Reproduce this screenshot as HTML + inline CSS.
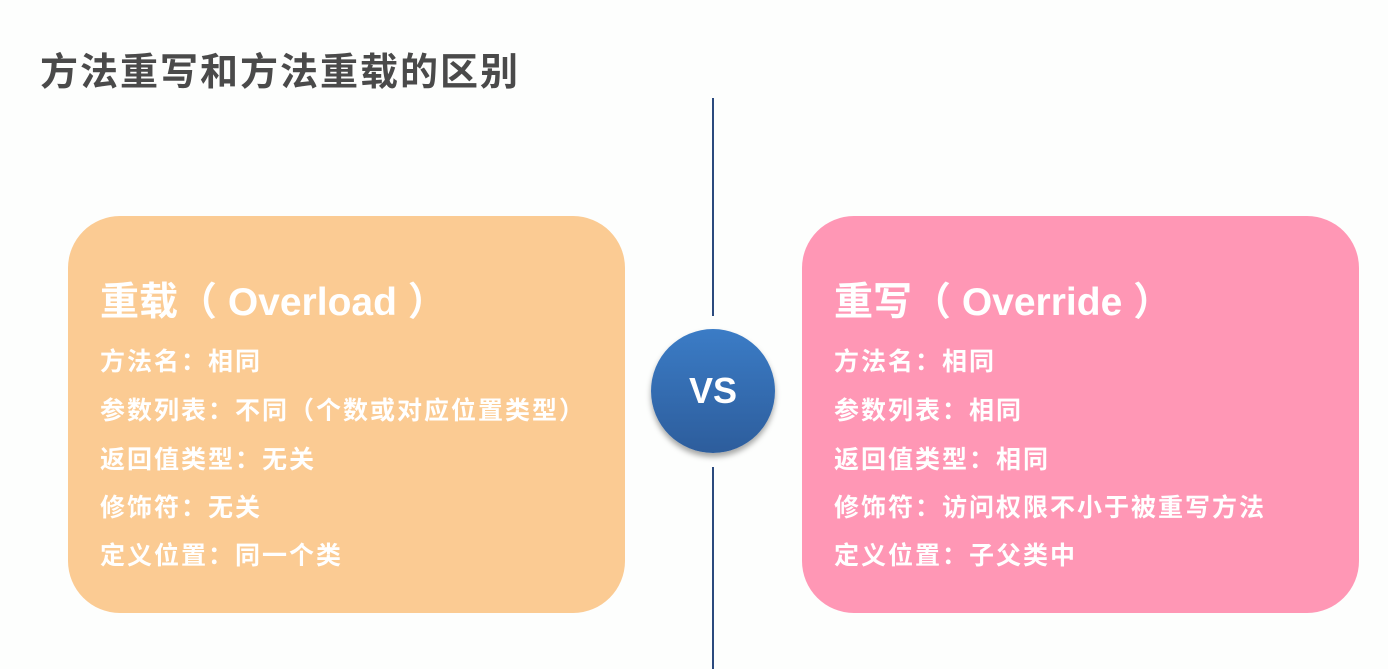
<!DOCTYPE html>
<html><head><meta charset="utf-8"><style>
body{margin:0;width:1388px;height:669px;background:#fdfefd;position:relative;overflow:hidden;font-family:"Liberation Sans","Noto Sans CJK SC",sans-serif;font-weight:bold}
.t{position:absolute;left:40px;top:50px;font-size:38px;letter-spacing:2px;color:#4a4a4a;line-height:46px}
.ln{position:absolute;left:712px;width:2px;background:#2b4a7e}
.box{position:absolute;top:216px;width:557px;height:397px;border-radius:52px;color:#fff}
.h{position:absolute;left:32px;top:62px;font-size:39px;line-height:50px;margin:0;white-space:pre}
.l{position:absolute;left:32px;font-size:25px;letter-spacing:2px;line-height:32px}
.c{position:absolute;left:651px;top:329px;width:124px;height:124px;border-radius:50%;background:linear-gradient(#3b7cc6,#2d5d9c);box-shadow:0 4px 6px rgba(0,0,0,.35);color:#fff;font-size:36px;text-align:center;line-height:124px}
</style></head><body>
<div class="t">方法重写和方法重载的区别</div>
<div class="ln" style="top:98px;height:218px"></div>
<div class="ln" style="top:467px;height:202px"></div>
<div class="box" style="left:68px;background:#fbcb93">
<div class="h">重载（ Overload ）</div>
<div class="l" style="top:130px">方法名：相同</div>
<div class="l" style="top:179px">参数列表：不同（个数或对应位置类型）</div>
<div class="l" style="top:228px">返回值类型：无关</div>
<div class="l" style="top:276px">修饰符：无关</div>
<div class="l" style="top:324px">定义位置：同一个类</div>
</div>
<div class="box" style="left:802px;background:#ff97b5">
<div class="h">重写（ Override ）</div>
<div class="l" style="top:130px">方法名：相同</div>
<div class="l" style="top:179px">参数列表：相同</div>
<div class="l" style="top:228px">返回值类型：相同</div>
<div class="l" style="top:276px">修饰符：访问权限不小于被重写方法</div>
<div class="l" style="top:324px">定义位置：子父类中</div>
</div>
<div class="c">VS</div>
</body></html>
